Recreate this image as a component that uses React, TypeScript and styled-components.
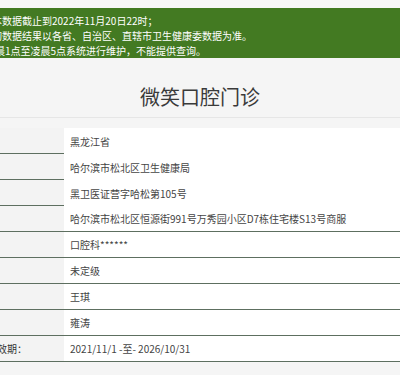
import React from 'react';
import styled, { createGlobalStyle } from 'styled-components';

const green = '#437a22';
const rule = '#5d6f60';

const GlobalStyle = createGlobalStyle`
  html, body {
    margin: 0;
    padding: 0;
    background: #f5f5f5;
  }
  body {
    font-family: 'Noto Sans CJK SC', 'Noto Sans', sans-serif;
  }
`;

const Page = styled.div`
  width: 400px;
  height: 375px;
  overflow: hidden;
  background: #f5f5f5;
`;

const TopGap = styled.div`
  height: 8px;
  background: #f7f7f7;
`;

const Notice = styled.div`
  background: ${green};
  color: #fff;
  font-size: 10px;
  line-height: 15px;
  padding: 5px 0 0;
  height: 45px;
  overflow: hidden;
`;

const NoticeLine = styled.div<{ $shift: number }>`
  white-space: nowrap;
  margin-left: ${(p) => -p.$shift}px;
`;

const TitleBar = styled.div`
  height: 60px;
  box-sizing: border-box;
  border-bottom: 1px solid #e6e6e6;
  text-align: center;
`;

const Title = styled.h1`
  margin: 0;
  padding-top: 28px;
  font-size: 20px;
  line-height: 22px;
  font-weight: 400;
  color: #3a3a3a;
`;

const Table = styled.div`
  margin-top: 10px;
  display: flex;
  flex-direction: column;
`;

const Row = styled.div<{ $full?: boolean }>`
  display: grid;
  grid-template-columns: 64px 1fr;
  height: 26px;
  box-sizing: border-box;
  border-bottom: ${(p) => (p.$full ? `1px solid ${rule}` : 'none')};
`;

const Label = styled.div<{ $full?: boolean }>`
  background: #f3f3f3;
  color: #333;
  font-size: 10px;
  display: flex;
  align-items: center;
  white-space: nowrap;
  overflow: hidden;
  box-sizing: border-box;
  border-bottom: ${(p) => (p.$full ? 'none' : `1px solid ${rule}`)};
  span {
    margin-left: -13px;
  }
`;

const Value = styled.div`
  background: #fff;
  color: #444;
  font-size: 10px;
  display: flex;
  align-items: center;
  padding-left: 6px;
  white-space: nowrap;
`;

const notices = [
  { text: '本数据截止到2022年11月20日22时；', shift: 8 },
  { text: '询数据结果以各省、自治区、直辖市卫生健康委数据为准。', shift: 8 },
  { text: '晨1点至凌晨5点系统进行维护，不能提供查询。', shift: 5 },
];

const rows = [
  { label: '', value: '黑龙江省', full: false },
  { label: '', value: '哈尔滨市松北区卫生健康局', full: false },
  { label: '', value: '黑卫医证营字哈松第105号', full: false },
  { label: '', value: '哈尔滨市松北区恒源街991号万秀园小区D7栋住宅楼S13号商服', full: true },
  { label: '', value: '口腔科******', full: true },
  { label: '', value: '未定级', full: true },
  { label: '', value: '王琪', full: true },
  { label: '', value: '雍涛', full: true },
  { label: '有效期：', value: '2021/11/1 -至- 2026/10/31', full: true },
];

export default function App() {
  return (
    <Page>
      <GlobalStyle />
      <TopGap />
      <Notice>
        {notices.map((n) => (
          <NoticeLine key={n.text} $shift={n.shift}>
            {n.text}
          </NoticeLine>
        ))}
      </Notice>
      <TitleBar>
        <Title>微笑口腔门诊</Title>
      </TitleBar>
      <Table>
        {rows.map((r) => (
          <Row key={r.value} $full={r.full}>
            <Label $full={r.full}>
              <span>{r.label}</span>
            </Label>
            <Value>{r.value}</Value>
          </Row>
        ))}
      </Table>
    </Page>
  );
}
